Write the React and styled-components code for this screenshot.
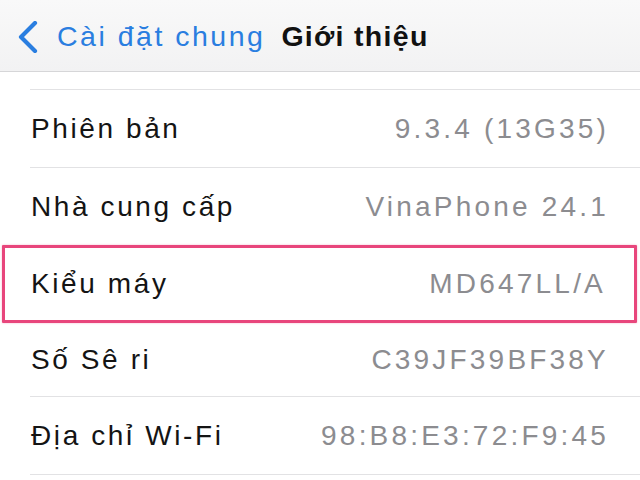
import React from "react";
import styled, { createGlobalStyle } from "styled-components";

const GlobalStyle = createGlobalStyle`
  html, body {
    margin: 0;
    padding: 0;
    background: #ffffff;
  }
  body {
    font-family: "Liberation Sans", Arial, "Noto Sans", sans-serif;
    -webkit-font-smoothing: antialiased;
  }
`;

const Screen = styled.div`
  width: 640px;
  height: 480px;
  overflow: hidden;
  background: #ffffff;
  display: flex;
  flex-direction: column;
`;

const NavBar = styled.header`
  height: 72px;
  flex: none;
  box-sizing: border-box;
  display: flex;
  align-items: center;
  padding: 2px 0 0 17px;
  background: linear-gradient(#f9f9f9, #f2f2f3);
  border-bottom: 1px solid #d6d6d8;
`;

const BackButton = styled.button`
  display: flex;
  align-items: center;
  gap: 18px;
  border: 0;
  background: none;
  padding: 0;
  margin: 0;
  color: #2a7ee0;
  font: inherit;
  font-size: 28.5px;
  letter-spacing: 2.5px;
  cursor: pointer;
`;

const Title = styled.h1`
  margin: 0 0 0 16px;
  font-size: 28.5px;
  font-weight: 700;
  color: #111111;
  letter-spacing: 1.3px;
`;

const List = styled.ul`
  list-style: none;
  margin: 0;
  padding: 17px 0 0 0;
  border: 0;
`;

const Separator = styled.li`
  height: 1px;
  margin-left: 30px;
  background: #e2e2e4;
`;

const Row = styled.li`
  display: flex;
  align-items: center;
  justify-content: space-between;
  box-sizing: border-box;
  height: ${(p) => p.$height || 77}px;
  padding: 0 31px 0 31px;
  font-size: 28px;
`;

const HighlightRow = styled(Row)`
  margin: 0 3px 0 2px;
  padding: 0 28px 0 26px;
  border: 3px solid #e8467c;
  border-radius: 1px;
  box-shadow: 0 0 2px rgba(232, 70, 124, 0.45);
`;

const Label = styled.span`
  color: #141414;
  letter-spacing: 2.6px;
`;

const Value = styled.span`
  color: #8c8c90;
  letter-spacing: 3.2px;
`;

function Chevron() {
  return (
    <svg width="22" height="32" viewBox="0 0 22 32" aria-hidden="true">
      <path
        d="M18 2 L4 16 L18 30"
        fill="none"
        stroke="#2a7ee0"
        strokeWidth="4.2"
        strokeLinecap="round"
        strokeLinejoin="round"
      />
    </svg>
  );
}

const rows = [
  { label: "Phiên bản", value: "9.3.4 (13G35)" },
  { label: "Nhà cung cấp", value: "VinaPhone 24.1" },
  { label: "Kiểu máy", value: "MD647LL/A", highlight: true },
  { label: "Số Sê ri", value: "C39JF39BF38Y", height: 73 },
  { label: "Địa chỉ Wi-Fi", value: "98:B8:E3:72:F9:45" },
];

export default function App() {
  return (
    <>
      <GlobalStyle />
      <Screen>
        <NavBar>
          <BackButton type="button">
            <Chevron />
            Cài đặt chung
          </BackButton>
          <Title>Giới thiệu</Title>
        </NavBar>
        <List>
          <Separator />
          {rows.map((r, i) => {
            const next = rows[i + 1];
            const showSep = !r.highlight && !(next && next.highlight);
            return (
              <React.Fragment key={r.label}>
                {r.highlight ? (
                  <HighlightRow $height={78}>
                    <Label>{r.label}</Label>
                    <Value>{r.value}</Value>
                  </HighlightRow>
                ) : (
                  <Row $height={r.height}>
                    <Label>{r.label}</Label>
                    <Value>{r.value}</Value>
                  </Row>
                )}
                {showSep && <Separator />}
              </React.Fragment>
            );
          })}
        </List>
      </Screen>
    </>
  );
}
